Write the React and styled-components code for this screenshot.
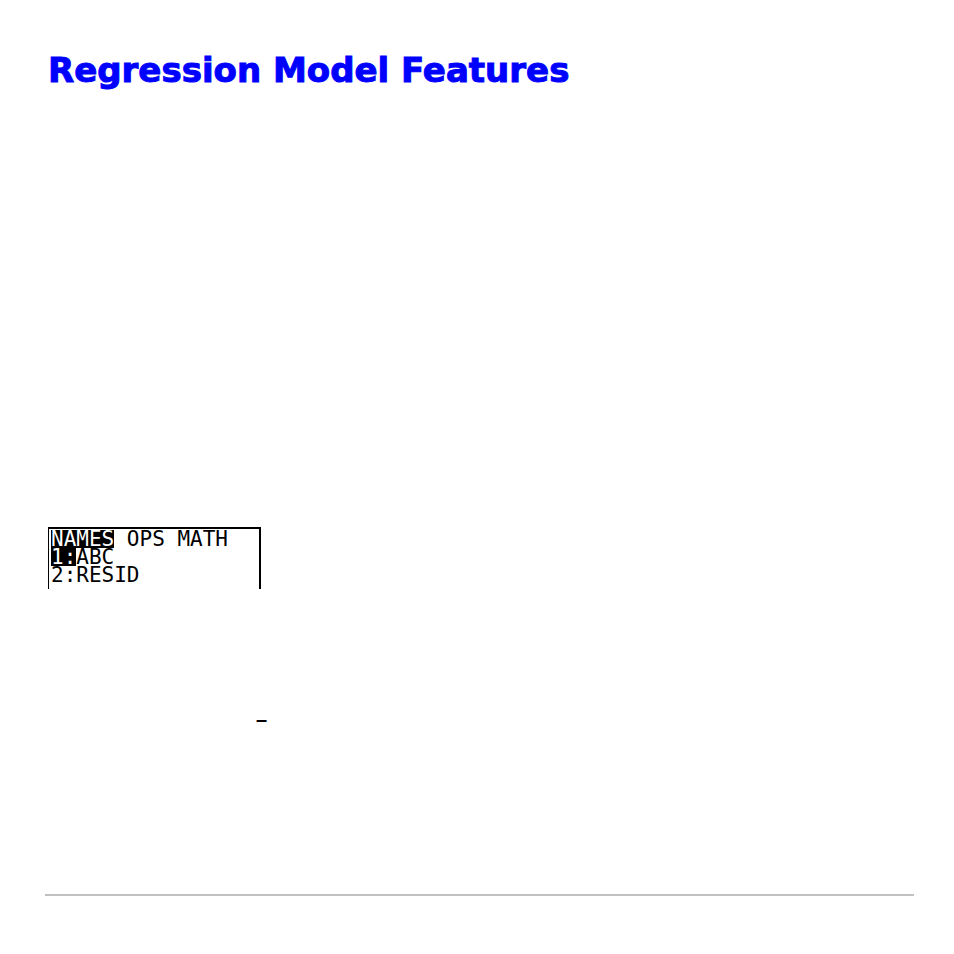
import React from "react"
import styled, { createGlobalStyle } from "styled-components"

const GlobalStyle = createGlobalStyle`
* {
  box-sizing: border-box;
}

body {
  margin: 0;
  background: #fff;
  color: #000;
}
`;

const Page = styled.main`
display: flex;
flex-direction: column;
align-items: flex-start;
padding: 48px 40px 56px 48px;
font-family: "Liberation Sans", Arial, sans-serif;
`;

const Title = styled.h1`
margin: 0;
font-family: "DejaVu Sans", Verdana, sans-serif;
font-size: 34px;
font-weight: bold;
line-height: 44px;
color: #0000ff;
-webkit-text-stroke: 1px #0000ff;
`;

const Screen = styled.section`
width: 213px;
height: 62px;
margin-top: 435px;
padding: 1px 0 0 2px;
border: solid #000;
border-width: 2px 2px 0 1px;
font-family: "DejaVu Sans Mono", "Liberation Mono", monospace;
font-size: 21px;
line-height: 18px;
`;

const ScreenRow = styled.div`
display: flex;
height: 18px;
white-space: pre;
`;

const Cell = styled.span`
height: 18px;
background: ${props => (props.$active ? "#000" : "transparent")};
color: ${props => (props.$active ? "#fff" : "#000")};
`;

const Note = styled.p`
margin: 118px 0 0 208px;
font-size: 20px;
font-weight: bold;
line-height: 24px;
`;

const Rule = styled.hr`
align-self: stretch;
height: 2px;
margin: 163px 0 0 -3px;
border: 0;
background: #c0c0c0;
`;

const App = () => (
  <>
    <GlobalStyle />
    <Page>
      <Title>Regression Model Features</Title>
      <Screen>
        <ScreenRow>
          <Cell $active>NAMES</Cell>
          <Cell> OPS MATH</Cell>
        </ScreenRow>
        <ScreenRow>
          <Cell $active>1:</Cell>
          <Cell>ABC</Cell>
        </ScreenRow>
        <ScreenRow>
          <Cell>2:</Cell>
          <Cell>RESID</Cell>
        </ScreenRow>
      </Screen>
      <Note>–</Note>
      <Rule />
    </Page>
  </>
)

export default App
